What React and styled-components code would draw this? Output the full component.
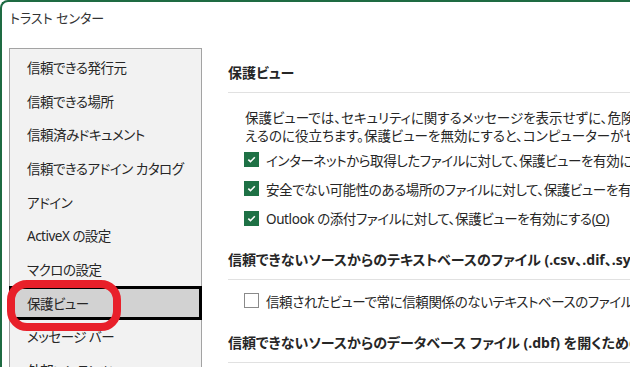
import React from "react";
import styled, { createGlobalStyle } from "styled-components";

const GlobalStyle = createGlobalStyle`
  html, body {
    margin: 0;
    padding: 0;
    background: #ffffff;
    overflow: hidden;
  }
  body {
    font-family: "Noto Sans", "Noto Sans CJK JP", sans-serif;
    font-feature-settings: "palt";
    color: #262626;
  }
`;

const Frame = styled.div`
  width: 630px;
  height: 367px;
  box-sizing: border-box;
  border-top: 2px solid #1e6b42;
  border-left: 2px solid #1e6b42;
  border-top-left-radius: 8px;
  overflow: hidden;
  display: flex;
  flex-direction: column;
  background: #fff;
`;

const Title = styled.div`
  height: 46px;
  box-sizing: border-box;
  padding: 6px 0 0 8px;
  font-size: 13px;
  line-height: 20px;
  color: #333;
`;

const Body = styled.div`
  flex: 1;
  display: flex;
  min-height: 0;
`;

const Sidebar = styled.ul`
  list-style: none;
  margin: 0 0 0 7px;
  padding: 1px 0 0;
  width: 193px;
  flex-shrink: 0;
  box-sizing: border-box;
  background: #f2f2f2;
  border: 1px solid #a3a3a3;
  border-bottom: none;
`;

const NavItem = styled.li`
  position: relative;
  height: 33.7px;
  box-sizing: border-box;
  display: flex;
  align-items: center;
  font-size: 13.5px;
  letter-spacing: -0.5px;
  white-space: nowrap;
  padding-left: ${(p) => (p.$active ? "15px" : "17px")};
  margin: ${(p) => (p.$active ? "0 -1px" : "0")};
  background: ${(p) => (p.$active ? "#d2d2d2" : "transparent")};
  border: ${(p) => (p.$active ? "3px solid #000" : "none")};
`;

const Ring = styled.span`
  position: absolute;
  left: -5px;
  top: -9px;
  width: 114px;
  height: 51px;
  box-sizing: border-box;
  border: 8px solid #e8202a;
  border-radius: 20px;
`;

const Main = styled.div`
  flex: 1;
  min-width: 0;
  padding-left: 26px;
  overflow: hidden;
  white-space: nowrap;
`;

const SectionHead = styled.div`
  margin-top: ${(p) => p.$top}px;
  padding-bottom: 9px;
  border-bottom: 1px solid #e1e1e1;
  font-size: 14px;
  font-weight: bold;
  line-height: 20px;
`;

const Para = styled.p`
  margin: 16px 0 0;
  padding-left: 17px;
  font-size: 13.5px;
  line-height: 18px;
`;

const OptionRow = styled.label`
  display: flex;
  align-items: center;
  gap: 7px;
  height: 29.3px;
  margin-top: ${(p) => p.$top || 0}px;
  padding-left: 16px;
  font-size: 13.5px;
  letter-spacing: -0.4px;
`;

const Box = styled.span`
  width: 15px;
  height: 15px;
  flex-shrink: 0;
  box-sizing: border-box;
  display: inline-flex;
  align-items: center;
  justify-content: center;
  background: ${(p) => (p.$checked ? "#1e7145" : "#fff")};
  border: 1px solid ${(p) => (p.$checked ? "#1e7145" : "#8a8a8a")};
`;

const Key = styled.span`
  text-decoration: underline;
`;

function Check({ checked }) {
  return (
    <Box $checked={checked}>
      {checked && (
        <svg width="11" height="11" viewBox="0 0 11 11">
          <path d="M2.3 5.6 L4.5 7.7 L8.8 3.3" fill="none" stroke="#fff" strokeWidth="1.6" />
        </svg>
      )}
    </Box>
  );
}

const navItems = [
  "信頼できる発行元",
  "信頼できる場所",
  "信頼済みドキュメント",
  "信頼できるアドイン カタログ",
  "アドイン",
  "ActiveX の設定",
  "マクロの設定",
  "保護ビュー",
  "メッセージ バー",
  "外部コンテンツ",
];

export default function App() {
  return (
    <>
      <GlobalStyle />
      <Frame>
        <Title>トラスト センター</Title>
        <Body>
          <Sidebar>
            {navItems.map((label) => (
              <NavItem key={label} $active={label === "保護ビュー"}>
                {label === "保護ビュー" && <Ring />}
                {label}
              </NavItem>
            ))}
          </Sidebar>
          <Main>
            <SectionHead $top={15}>保護ビュー</SectionHead>
            <Para>
              保護ビューでは、セキュリティに関するメッセージを表示せずに、危険を及ぼす可能性のあるファイルを開き、コンピューターへの危険を抑
              <br />
              えるのに役立ちます。保護ビューを無効にすると、コンピューターがセキュリティの脅威にさらされる可能性があります。
            </Para>
            <OptionRow>
              <Check checked />
              <span>インターネットから取得したファイルに対して、保護ビューを有効にする(<Key>I</Key>)</span>
            </OptionRow>
            <OptionRow>
              <Check checked />
              <span>安全でない可能性のある場所のファイルに対して、保護ビューを有効にする(<Key>L</Key>)</span>
            </OptionRow>
            <OptionRow>
              <Check checked />
              <span>Outlook の添付ファイルに対して、保護ビューを有効にする(<Key>O</Key>)</span>
            </OptionRow>
            <SectionHead $top={17}>信頼できないソースからのテキストベースのファイル (.csv、.dif、.sylk)</SectionHead>
            <OptionRow $top={6}>
              <Check />
              <span>信頼されたビューで常に信頼関係のないテキストベースのファイル (.csv、.dif、.sylk) を開く(<Key>T</Key>)</span>
            </OptionRow>
            <SectionHead $top={18}>信頼できないソースからのデータベース ファイル (.dbf) を開くための設定</SectionHead>
          </Main>
        </Body>
      </Frame>
    </>
  );
}
